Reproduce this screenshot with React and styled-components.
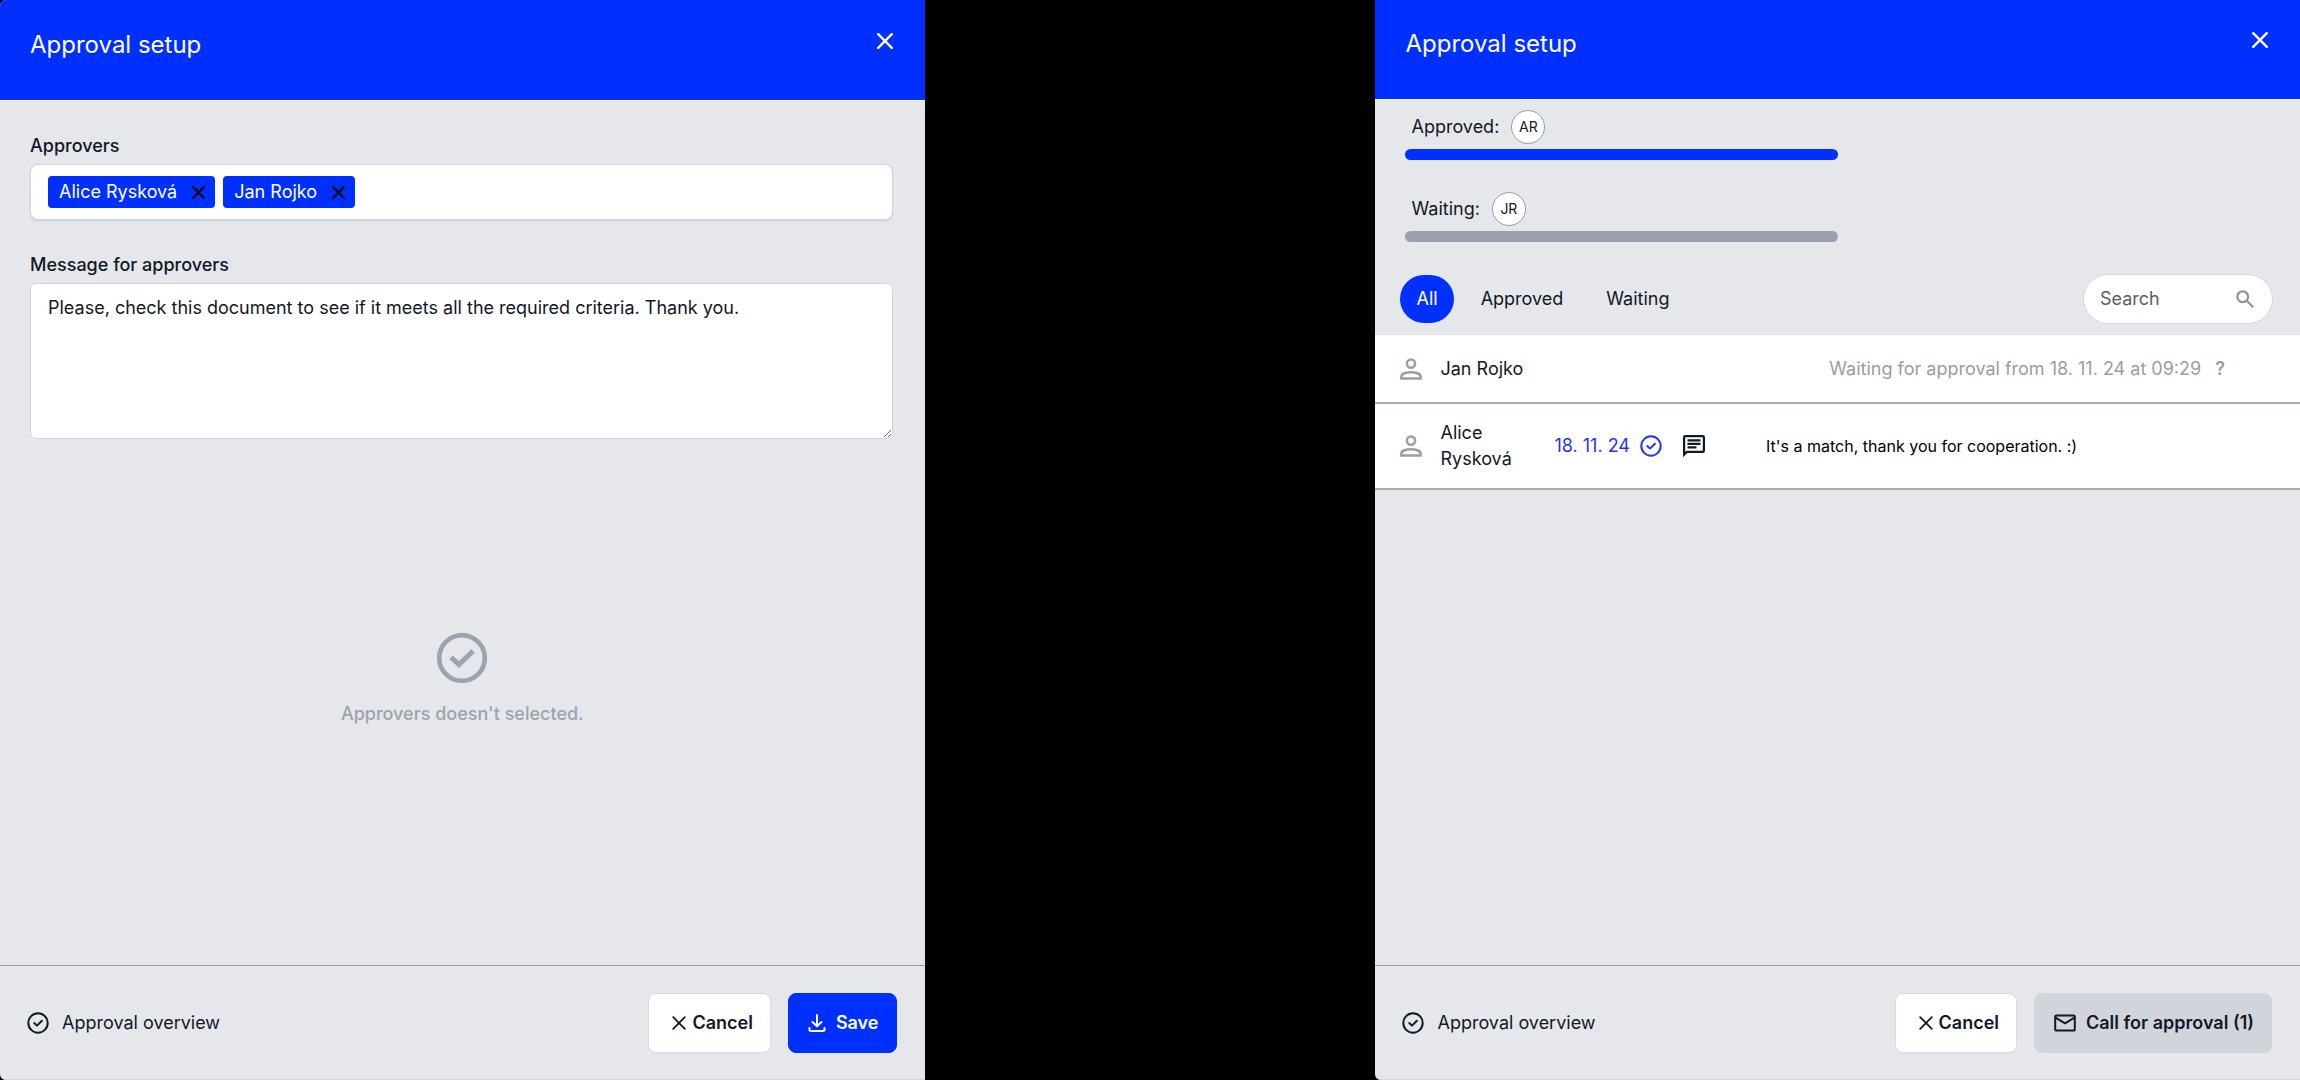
import { useState } from "react";
import styled, { createGlobalStyle } from "styled-components";

const GlobalStyle = createGlobalStyle`
  * {
    box-sizing: border-box;
  }

  body {
    margin: 0;
    background: #000000;
    color: #111827;
    font-family: Inter, "Liberation Sans", sans-serif;
    font-size: 18px;
    line-height: 26px;
  }

  button, input, textarea {
    font: inherit;
    color: inherit;
  }

  button {
    cursor: pointer;
  }

  svg {
    display: block;
    flex-shrink: 0;
  }
`;

const Page = styled.main`
  display: grid;
  grid-template-columns: 41fr 20fr 41fr;
  min-height: 100vh;
`;

const Panel = styled.section`
  grid-column: ${(props) => props.$column};
  display: flex;
  flex-direction: column;
  min-width: 0;
  background: #e5e7eb;
  border-radius: ${(props) => (props.$rounded ? "6px 0 0 6px" : "0 0 0 6px")};
  box-shadow: inset 0 -1px 0 #d1d3d9;
  overflow: hidden;
`;

const Header = styled.header`
  display: flex;
  justify-content: space-between;
  align-items: flex-start;
  height: ${(props) => (props.$compact ? 100 : 101)}px;
  padding: ${(props) => (props.$compact ? 28 : 29)}px 32px 0 30px;
  background: #0030ff;
  border-bottom: 1px solid #f4f5fb;
  color: #ffffff;
`;

const Title = styled.h1`
  margin: 0;
  font-size: 24px;
  line-height: 32px;
  font-weight: 400;
`;

const CloseButton = styled.button`
  padding: 4px 0;
  border: none;
  background: none;
  color: #ffffff;
`;

const Form = styled.form`
  display: flex;
  flex-direction: column;
  padding: 32px 32px 0 30px;
`;

const Label = styled.label`
  margin-bottom: 5px;
  font-weight: 500;
`;

const TagField = styled.div`
  display: flex;
  align-items: center;
  gap: 8px;
  height: 56px;
  margin-bottom: 32px;
  padding: 0 17px;
  background: #ffffff;
  border: 1px solid #d1d5db;
  border-radius: 8px;
  box-shadow: 0 1px 2px rgba(0, 0, 0, 0.12);
`;

const Tag = styled.span`
  display: flex;
  align-items: center;
  gap: 15px;
  height: 32px;
  padding: 0 10px 0 11px;
  border-radius: 4px;
  background: #0030ff;
  color: #ffffff;
`;

const TagRemove = styled.button`
  padding: 0;
  border: none;
  background: none;
  color: #0b1020;
`;

const TagInput = styled.input`
  flex: 1;
  min-width: 0;
  border: none;
  outline: none;
  background: none;
`;

const Message = styled.textarea`
  display: block;
  width: 100%;
  height: 156px;
  padding: 11px 17px;
  background: #ffffff;
  border: 1px solid #d1d5db;
  border-radius: 6px;
  outline: none;
  resize: vertical;
`;

const Empty = styled.div`
  flex: 1;
  display: flex;
  flex-direction: column;
  align-items: center;
  justify-content: center;
  gap: 18px;
  padding-bottom: 44px;
  color: #9ca3af;
  font-weight: 500;
`;

const Footer = styled.footer`
  display: flex;
  align-items: center;
  gap: 17px;
  height: 115px;
  margin-top: auto;
  padding: 0 28px 0 27px;
  border-top: 1px solid #979ba5;
`;

const OverviewLink = styled.a`
  display: flex;
  align-items: center;
  gap: 13px;
  margin-right: auto;
  color: inherit;
  text-decoration: none;
`;

const buttonColors = {
  plain: "background: #ffffff; border-color: #d8dade; color: #111827;",
  primary: "background: #0030ff; border-color: #0030ff; color: #ffffff;",
  disabled: "background: #d1d5db; border-color: #d1d5db; color: #111827;",
};

const ActionButton = styled.button`
  display: flex;
  align-items: center;
  gap: ${(props) => (props.$variant === "plain" ? 6 : 10)}px;
  height: 60px;
  padding: 0 17px 0 ${(props) => (props.$variant === "plain" ? 23 : 19)}px;
  border: 1px solid;
  border-radius: 8px;
  font-weight: 600;
  ${(props) => buttonColors[props.$variant]}
`;

const Progress = styled.div`
  width: 50%;
  margin-bottom: 32px;
  padding-left: 30px;
`;

const ProgressHead = styled.div`
  display: flex;
  align-items: center;
  gap: 12px;
  margin-bottom: 5px;
  padding-left: 6px;
`;

const Avatar = styled.span`
  display: flex;
  align-items: center;
  justify-content: center;
  width: 34px;
  height: 34px;
  border: 1px solid #9a9ca3;
  border-radius: 50%;
  background: #ffffff;
  font-size: 14px;
`;

const ProgressBar = styled.div`
  height: 11px;
  border-radius: 6px;
  background: ${(props) => props.$color};
`;

const Overview = styled.div`
  padding-top: 10px;
`;

const Toolbar = styled.div`
  display: flex;
  align-items: center;
  gap: 11px;
  padding: 0 27px 11px 25px;
`;

const Tab = styled.button`
  height: 48px;
  padding: 0 16px;
  border: none;
  border-radius: 24px;
  background: ${(props) => (props.$active ? "#0030ff" : "none")};
  color: ${(props) => (props.$active ? "#ffffff" : "inherit")};
`;

const Search = styled.label`
  display: flex;
  align-items: center;
  width: 190px;
  height: 50px;
  margin-left: auto;
  padding: 0 18px 0 16px;
  border: 1px solid #d5d7dc;
  border-radius: 25px;
  background: #ffffff;
  color: #8f9298;
`;

const SearchInput = styled.input`
  flex: 1;
  min-width: 0;
  padding: 0;
  border: none;
  outline: none;
  background: none;
  color: #111827;

  &::placeholder {
    color: #5b5e66;
    opacity: 1;
  }
`;

const List = styled.ul`
  margin: 0;
  padding: 0;
  list-style: none;
`;

const ListRow = styled.li`
  display: flex;
  align-items: center;
  padding: ${(props) => (props.$tall ? "16px" : "21px")} 75px ${(props) => (props.$tall ? "16px" : "20px")} 25px;
  border-bottom: 2px solid #aaacb5;
  background: #ffffff;
`;

const UserIconBox = styled.span`
  margin-right: 18px;
  color: #9a9ea8;
`;

const Name = styled.span`
  width: ${(props) => (props.$wide ? "auto" : "92px")};
`;

const WaitingStatus = styled.span`
  display: flex;
  gap: 14px;
  margin-left: auto;
  color: #9a9ca4;
`;

const Help = styled.span`
  font-weight: 600;
`;

const ApprovedStatus = styled.span`
  display: flex;
  align-items: center;
  gap: 10px;
  margin: 0 21px 0 22px;
  color: #1f35ee;
`;

const Comment = styled.span`
  margin-left: 61px;
  font-size: 16px;
  color: #000000;
`;

const Cross = ({ size, width = 2 }) => (
  <svg width={size} height={size} viewBox={`0 0 ${size} ${size}`} fill="none" stroke="currentColor" strokeWidth={width} strokeLinecap="round">
    <path d={`M1.2 1.2L${size - 1.2} ${size - 1.2}M${size - 1.2} 1.2L1.2 ${size - 1.2}`} />
  </svg>
);

const CheckCircle = () => (
  <svg width="22" height="22" viewBox="0 0 22 22" fill="none" stroke="currentColor" strokeWidth="2" strokeLinecap="round" strokeLinejoin="round">
    <circle cx="11" cy="11" r="9.7" />
    <path d="M7.3 11L10 13.6L14.9 8.7" />
  </svg>
);

const BigCheckCircle = () => (
  <svg width="50" height="50" viewBox="0 0 50 50" fill="none" stroke="currentColor">
    <circle cx="25" cy="25" r="22.8" strokeWidth="4.6" />
    <path d="M14 24.3L22 31.5L36 18" strokeWidth="5" />
  </svg>
);

const SaveIcon = () => (
  <svg width="18" height="18" viewBox="0 0 18 18" fill="none" stroke="currentColor" strokeWidth="2" strokeLinecap="round" strokeLinejoin="round">
    <path d="M9 1V12M4.5 8L9 12.3L13.5 8" />
    <path d="M1.5 14V15.5Q1.5 17 3 17H15Q16.5 17 16.5 15.5V14" />
  </svg>
);

const MailIcon = () => (
  <svg width="22" height="18" viewBox="0 0 22 18" fill="none" stroke="currentColor" strokeWidth="2" strokeLinejoin="round">
    <rect x="1.2" y="1.4" width="19.6" height="15.2" rx="1.2" />
    <path d="M1.5 3.6L11 9.4L20.5 3.6" />
  </svg>
);

const UserIcon = () => (
  <svg width="22" height="22" viewBox="0 0 22 22" fill="none" stroke="currentColor" strokeWidth="2.5">
    <circle cx="11" cy="5.6" r="4.1" />
    <path d="M1.4 20.4V18.4C1.4 15.6 6.6 14.2 11 14.2S20.6 15.6 20.6 18.4V20.4Z" />
  </svg>
);

const ChatIcon = () => (
  <svg width="22" height="22" viewBox="0 0 22 22" fill="none" stroke="currentColor" strokeWidth="2.2">
    <path d="M1.1 19.6V2.2Q1.1 1.1 2.2 1.1H19.8Q20.9 1.1 20.9 2.2V15.8Q20.9 16.9 19.8 16.9H3.8Z" />
    <path d="M4.5 5.4H17.5M4.5 8.9H17.5M4.5 12.4H13.5" />
  </svg>
);

const SearchIcon = () => (
  <svg width="18" height="18" viewBox="0 0 18 18" fill="none" stroke="currentColor" strokeWidth="2.2">
    <circle cx="6.7" cy="6.7" r="5.4" />
    <path d="M10.8 10.8L17.2 17.2" />
  </svg>
);

const approvers = ["Alice Rysková", "Jan Rojko"];

const PanelHeader = ({ compact }) => (
  <Header $compact={compact}>
    <Title>Approval setup</Title>
    <CloseButton type="button" aria-label="Close">
      <Cross size={16} width={2.4} />
    </CloseButton>
  </Header>
);

const PanelFooter = ({ children }) => (
  <Footer>
    <OverviewLink href="#overview">
      <CheckCircle />
      Approval overview
    </OverviewLink>
    <ActionButton type="button" $variant="plain">
      <Cross size={14} width={1.8} />
      Cancel
    </ActionButton>
    {children}
  </Footer>
);

const SetupPanel = () => {
  const [selected, setSelected] = useState(approvers);
  const [message, setMessage] = useState(
    "Please, check this document to see if it meets all the required criteria. Thank you."
  );

  return (
    <Panel $column={1} $rounded>
      <PanelHeader />
      <Form>
        <Label htmlFor="approvers">Approvers</Label>
        <TagField>
          {selected.map((name) => (
            <Tag key={name}>
              {name}
              <TagRemove
                type="button"
                aria-label={`Remove ${name}`}
                onClick={() => setSelected(selected.filter((item) => item !== name))}
              >
                <Cross size={13} width={2.4} />
              </TagRemove>
            </Tag>
          ))}
          <TagInput id="approvers" />
        </TagField>
        <Label htmlFor="message">Message for approvers</Label>
        <Message id="message" value={message} onChange={(e) => setMessage(e.target.value)} />
      </Form>
      <Empty>
        <BigCheckCircle />
        Approvers doesn't selected.
      </Empty>
      <PanelFooter>
        <ActionButton type="button" $variant="primary">
          <SaveIcon />
          Save
        </ActionButton>
      </PanelFooter>
    </Panel>
  );
};

const OverviewPanel = () => {
  const [tab, setTab] = useState("All");

  return (
    <Panel $column={3}>
      <PanelHeader compact />
      <Overview>
        <Progress>
          <ProgressHead>
            Approved: <Avatar>AR</Avatar>
          </ProgressHead>
          <ProgressBar $color="#0030ff" />
        </Progress>
        <Progress>
          <ProgressHead>
            Waiting: <Avatar>JR</Avatar>
          </ProgressHead>
          <ProgressBar $color="#9ca0ac" />
        </Progress>
        <Toolbar>
          {["All", "Approved", "Waiting"].map((name) => (
            <Tab key={name} type="button" $active={tab === name} onClick={() => setTab(name)}>
              {name}
            </Tab>
          ))}
          <Search>
            <SearchInput type="text" placeholder="Search" aria-label="Search" />
            <SearchIcon />
          </Search>
        </Toolbar>
        <List>
          {tab !== "Approved" && (
            <ListRow>
              <UserIconBox><UserIcon /></UserIconBox>
              <Name $wide>Jan Rojko</Name>
              <WaitingStatus>
                Waiting for approval from 18. 11. 24 at 09:29
                <Help>?</Help>
              </WaitingStatus>
            </ListRow>
          )}
          {tab !== "Waiting" && (
            <ListRow $tall>
              <UserIconBox><UserIcon /></UserIconBox>
              <Name>Alice Rysková</Name>
              <ApprovedStatus>
                18. 11. 24
                <CheckCircle />
              </ApprovedStatus>
              <ChatIcon />
              <Comment>It's a match, thank you for cooperation. :)</Comment>
            </ListRow>
          )}
        </List>
      </Overview>
      <PanelFooter>
        <ActionButton type="button" $variant="disabled" disabled>
          <MailIcon />
          Call for approval (1)
        </ActionButton>
      </PanelFooter>
    </Panel>
  );
};

const App = () => (
  <>
    <GlobalStyle />
    <Page>
      <SetupPanel />
      <OverviewPanel />
    </Page>
  </>
);

export default App;
